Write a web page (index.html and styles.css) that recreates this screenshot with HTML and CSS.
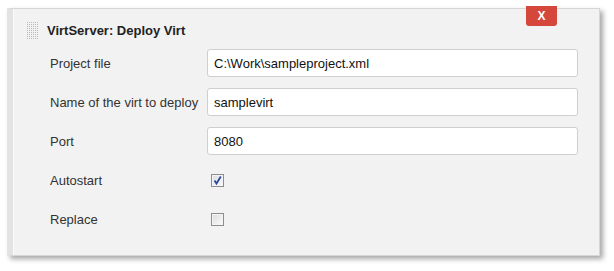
FILE: index.html
```html
<!DOCTYPE html>
<html lang="en">
<head>
    <meta charset="UTF-8">
    <title>VirtServer: Deploy Virt</title>
    <link rel="stylesheet" href="styles.css">
</head>
<body>
    <div class="wrap">
        <div class="panel">
            <button class="close">X</button>
            <div class="header">
                <svg class="grip" width="11" height="17" viewBox="0 0 11 17">
                    <defs>
                        <pattern id="dots" width="2" height="2" patternUnits="userSpaceOnUse">
                            <rect width="1" height="1" fill="#b9b9b9"/>
                        </pattern>
                    </defs>
                    <rect width="11" height="17" fill="url(#dots)"/>
                </svg>
                <span class="title">VirtServer: Deploy Virt</span>
            </div>
            <div class="form">
                <label>Project file</label>
                <input class="field" type="text" value="C:\Work\sampleproject.xml">

                <label>Name of the virt to deploy</label>
                <input class="field" type="text" value="samplevirt">

                <label>Port</label>
                <input class="field" type="text" value="8080">

                <label>Autostart</label>
                <div class="cell">
                    <span class="check">
                        <svg width="11" height="11" viewBox="0 0 11 11">
                            <path d="M2.5 5.5 L4.5 8.5 L8.8 1.5" fill="none" stroke="#2c4aa3" stroke-width="1.8"/>
                        </svg>
                    </span>
                </div>

                <label>Replace</label>
                <div class="cell">
                    <span class="check"></span>
                </div>
            </div>
        </div>
    </div>
</body>
</html>
```

FILE: styles.css
```css
body {
    margin: 0;
    background-color: #fff;
    font-family: "Liberation Sans", Arial, sans-serif;
    color: #333;
}
.wrap {
    padding: 8px 14px 15px 7px;
}
.panel {
    position: relative;
    box-sizing: border-box;
    width: 593px;
    height: 248px;
    padding: 0 21px 0 37px;
    background-color: #f2f2f2;
    border: 1px solid #d6d6d6;
    border-left: 6px solid #e3e3e3;
    box-shadow: inset 1px 0 0 #fbfbfb, 3px 3px 5px rgba(0,0,0,0.35);
}
.close {
    position: absolute;
    top: -3px;
    left: 513px;
    width: 31px;
    height: 20px;
    padding: 0;
    border: none;
    border-radius: 0 0 3px 3px;
    background-color: #d5473a;
    color: #fff;
    font-family: "Liberation Sans", Arial, sans-serif;
    font-size: 12px;
    font-weight: bold;
    line-height: 20px;
}
.header {
    display: flex;
    align-items: center;
    height: 20px;
    padding-top: 11px;
    margin-left: -23px;
    margin-bottom: 9px;
}
.grip {
    display: block;
    margin-right: 9px;
}
.title {
    font-size: 13px;
    font-weight: bold;
    color: #222;
}
.form {
    display: grid;
    grid-template-columns: 157px 1fr;
    grid-auto-rows: 28px;
    row-gap: 11px;
}
.form label {
    display: flex;
    align-items: center;
    font-size: 13px;
    color: #333;
}
.field {
    box-sizing: border-box;
    height: 28px;
    width: 100%;
    margin: 0;
    padding: 0 6px;
    border: 1px solid #cfcfcf;
    border-radius: 3px;
    background-color: #fff;
    font-family: "Liberation Sans", Arial, sans-serif;
    font-size: 13px;
    color: #111;
}
.cell {
    display: flex;
    align-items: center;
    padding-left: 4px;
}
.check {
    display: block;
    box-sizing: border-box;
    width: 13px;
    height: 13px;
    border: 1px solid #8e8e8e;
    background: linear-gradient(135deg, #dcdcdc, #fbfbfb);
    box-shadow: inset 0 0 0 1px #f4f4f4;
}
.check svg {
    display: block;
}
```
